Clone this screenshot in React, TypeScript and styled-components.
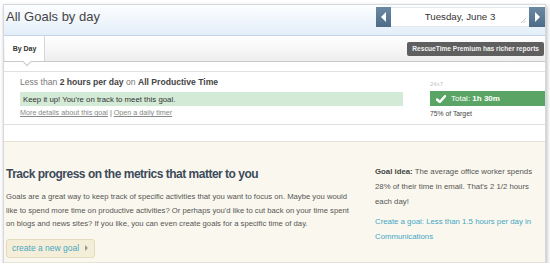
import React from "react";
import styled, { createGlobalStyle } from "styled-components";

const GlobalStyle = createGlobalStyle`
  html, body { margin: 0; padding: 0; background: #fff; }
  body { font-family: "Liberation Sans", Arial, sans-serif; color: #555; }
`;

const Panel = styled.div`
  box-sizing: border-box;
  width: 543px;
  margin: 4px 0 0 3px;
  border: 1px solid #d3d9df;
  border-bottom: none;
  box-shadow: 1px 2px 4px rgba(0, 0, 0, 0.28);
  background: #fff;
`;

const Header = styled.div`
  height: 30px;
  display: flex;
  justify-content: space-between;
  align-items: flex-start;
  background: linear-gradient(#fdfeff, #e3eef9);
  border-bottom: 1px solid #c4d4e4;
`;

const Title = styled.h1`
  margin: 0;
  padding: 3px 0 0 2px;
  font-size: 13px;
  line-height: 17px;
  font-weight: normal;
  color: #444;
`;

const DatePicker = styled.div`
  display: flex;
  height: 20px;
  margin-top: 2px;
`;

const ArrowButton = styled.button<{ $dir: "left" | "right" }>`
  width: ${(p) => (p.$dir === "left" ? 15 : 16)}px;
  height: 20px;
  padding: 0;
  border: none;
  background: linear-gradient(#6c89a3, #4e6c87);
  display: flex;
  align-items: center;
  justify-content: center;
  &::before {
    content: "";
    border-top: 5px solid transparent;
    border-bottom: 5px solid transparent;
    ${(p) =>
      p.$dir === "left"
        ? "border-right: 5px solid #fff;"
        : "border-left: 5px solid #fff;"}
  }
`;

const DateBox = styled.div`
  position: relative;
  box-sizing: border-box;
  width: 138px;
  height: 20px;
  background: #fff;
  border-top: 1px solid #e3e9ef;
  border-bottom: 1px solid #e3e9ef;
  font-size: 9.7px;
  line-height: 18px;
  text-align: center;
  color: #333;
`;

const Grip = styled.svg`
  position: absolute;
  right: 3px;
  bottom: 3px;
`;

const TabBar = styled.div`
  height: 25px;
  display: flex;
  justify-content: space-between;
  align-items: center;
  background: linear-gradient(#ffffff, #eeeeee);
  border-bottom: 1px solid #c9c9c9;
`;

const Tab = styled.div`
  position: relative;
  align-self: stretch;
  width: 39px;
  margin-left: 1px;
  background: #fff;
  border-right: 1px solid #d6d6d6;
  font-size: 7px;
  font-weight: bold;
  color: #333;
  display: flex;
  align-items: center;
  justify-content: center;
  &::after {
    content: "";
    position: absolute;
    left: 19px;
    bottom: -4px;
    width: 5px;
    height: 5px;
    background: #fff;
    border-right: 1px solid #c9c9c9;
    border-bottom: 1px solid #c9c9c9;
    transform: rotate(45deg);
  }
`;

const Badge = styled.div`
  margin-right: 1px;
  padding: 0 5px;
  height: 14px;
  line-height: 14px;
  border-radius: 2px;
  background: #5f5f5f;
  color: #f2f2f2;
  font-size: 6.6px;
  font-weight: bold;
`;

const GoalList = styled.div`
  padding: 9px 0 16px;
`;

const GoalRow = styled.div`
  display: grid;
  grid-template-columns: 383px 1fr;
  column-gap: 27px;
  padding: 5px 0 5px 16px;
  border-top: 1px solid #e1e1e1;
  border-bottom: 1px solid #e1e1e1;
`;

const GoalMain = styled.div`
  display: flex;
  flex-direction: column;
`;

const GoalTitle = styled.div`
  font-size: 8.6px;
  line-height: 11px;
  color: #777;
  b { color: #444; }
`;

const StatusBar = styled.div<{ $strong?: boolean }>`
  display: flex;
  align-items: center;
  gap: 5px;
  background: ${(p) => (p.$strong ? "#5aa565" : "#d3ead6")};
  color: ${(p) => (p.$strong ? "#fff" : "#333")};
  font-size: ${(p) => (p.$strong ? "8px" : "7.8px")};
  height: ${(p) => (p.$strong ? 15 : 14)}px;
  margin-top: ${(p) => (p.$strong ? 2 : 4)}px;
  padding-left: ${(p) => (p.$strong ? 6 : 3)}px;
`;

const Links = styled.div`
  margin-top: 2px;
  font-size: 7.2px;
  line-height: 10px;
  color: #888;
  a { color: #888; text-decoration: underline; }
  span { color: #666; margin: 0 2px; }
`;

const GoalSide = styled.div`
  display: flex;
  flex-direction: column;
`;

const Schedule = styled.div`
  margin-top: 2px;
  font-size: 6px;
  line-height: 10px;
  color: #c2c2c2;
`;

const Target = styled.div`
  margin-top: 2px;
  font-size: 6.8px;
  line-height: 11px;
  color: #444;
`;

const Promo = styled.div`
  display: grid;
  grid-template-columns: 369px 162px;
  padding: 22px 0 4px 2px;
  background: #faf8ee;
  border-top: 1px solid #e6e3d6;
  border-bottom: 1px solid #e6e3d6;
`;

const PromoMain = styled.div`
  width: 350px;
`;

const Heading = styled.h2`
  margin: 0;
  font-size: 12px;
  letter-spacing: -0.5px;
  line-height: 20px;
  font-weight: bold;
  color: #3d4a5b;
`;

const Body = styled.p`
  margin: 6px 0 0;
  font-size: 7.7px;
  line-height: 13.5px;
  color: #555;
`;

const CreateButton = styled.button`
  margin-top: 8px;
  height: 19px;
  padding: 0 6px 0 5px;
  display: inline-flex;
  align-items: center;
  gap: 6px;
  background: #f4eed9;
  border: 1px solid #e3dbbd;
  border-radius: 3px;
  font-family: "Liberation Sans", Arial, sans-serif;
  font-size: 8.5px;
  color: #4aa8c2;
  &::after {
    content: "";
    border-top: 3px solid transparent;
    border-bottom: 3px solid transparent;
    border-left: 3px solid #999;
  }
`;

const Aside = styled.div`
  font-size: 7.8px;
  line-height: 15px;
  color: #555;
  b { color: #444; }
`;

const AsideP = styled.p`
  margin: 0 0 5px;
`;

const IdeaLink = styled.a`
  color: #45a5c4;
  text-decoration: none;
`;

export default function App() {
  return (
    <>
      <GlobalStyle />
      <Panel>
        <Header>
          <Title>All Goals by day</Title>
          <DatePicker>
            <ArrowButton $dir="left" aria-label="Previous day" />
            <DateBox>
              Tuesday, June 3
              <Grip width="5" height="5" viewBox="0 0 5 5">
                <path d="M5 0L0 5M5 2.5L2.5 5" stroke="#b5b5b5" strokeWidth="0.8" />
              </Grip>
            </DateBox>
            <ArrowButton $dir="right" aria-label="Next day" />
          </DatePicker>
        </Header>
        <TabBar>
          <Tab>By Day</Tab>
          <Badge>RescueTime Premium has richer reports</Badge>
        </TabBar>
        <GoalList>
          <GoalRow>
            <GoalMain>
              <GoalTitle>
                Less than <b>2 hours per day</b> on <b>All Productive Time</b>
              </GoalTitle>
              <StatusBar>Keep it up! You're on track to meet this goal.</StatusBar>
              <Links>
                <a>More details about this goal</a>
                <span>|</span>
                <a>Open a daily timer</a>
              </Links>
            </GoalMain>
            <GoalSide>
              <Schedule>24x7</Schedule>
              <StatusBar $strong>
                <svg width="10" height="8" viewBox="0 0 10 8">
                  <path d="M1 4.5 L3.8 7 L9 1.2" stroke="#fff" strokeWidth="2.4" fill="none" strokeLinecap="round" strokeLinejoin="round" />
                </svg>
                <span>
                  Total: <b>1h 30m</b>
                </span>
              </StatusBar>
              <Target>75% of Target</Target>
            </GoalSide>
          </GoalRow>
        </GoalList>
        <Promo>
          <PromoMain>
            <Heading>Track progress on the metrics that matter to you</Heading>
            <Body>
              Goals are a great way to keep track of specific activities that you want to focus on. Maybe you would
              like to spend more time on productive activities? Or perhaps you'd like to cut back on your time spent
              on blogs and news sites? If you like, you can even create goals for a specific time of day.
            </Body>
            <CreateButton>create a new goal</CreateButton>
          </PromoMain>
          <Aside>
            <AsideP>
              <b>Goal idea:</b> The average office worker spends 28% of their time in email. That's 2 1/2 hours each
              day!
            </AsideP>
            <AsideP>
              <IdeaLink>Create a goal: Less than 1.5 hours per day in Communications</IdeaLink>
            </AsideP>
          </Aside>
        </Promo>
      </Panel>
    </>
  );
}
